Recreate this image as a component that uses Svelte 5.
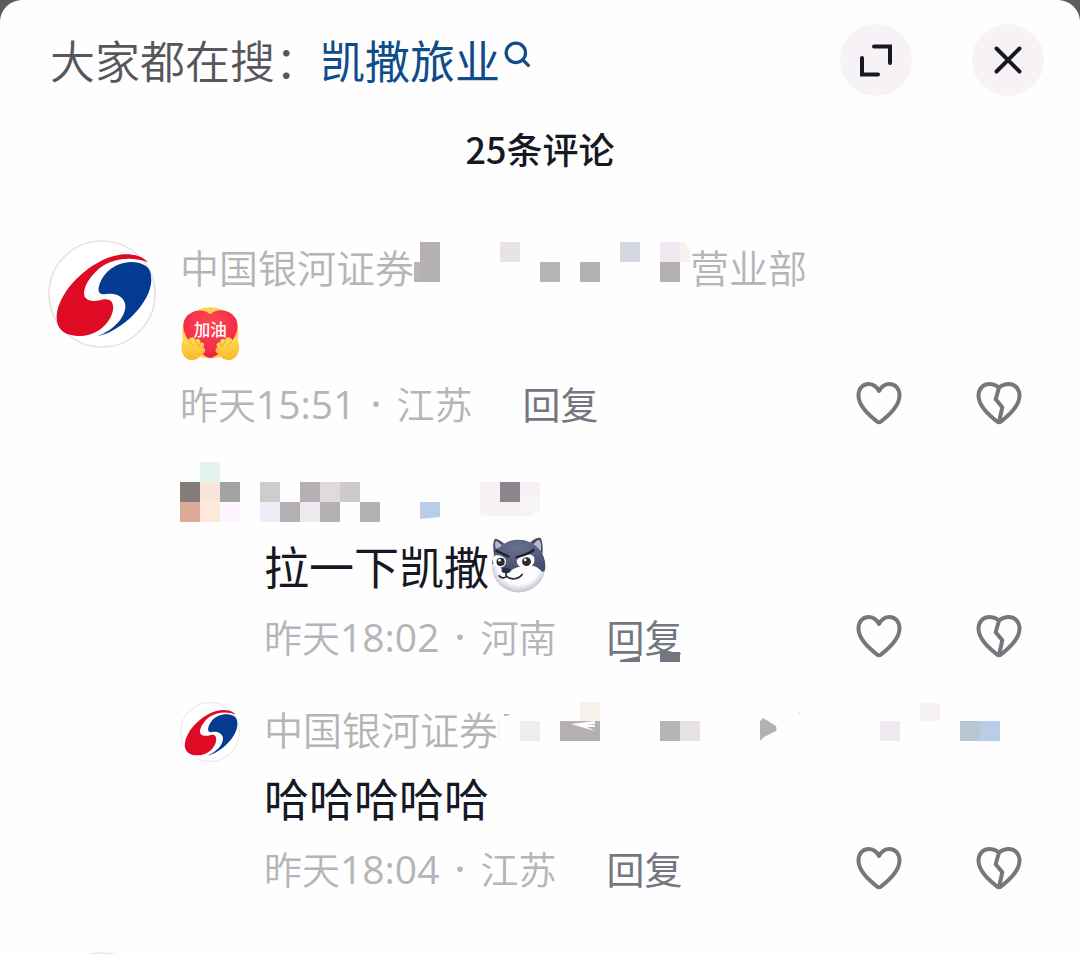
<script>
  const comments = [
    {
      kind: 'main',
      name: '中国银河证券',
      suffix: '营业部',
      mask: 'branch',
      sticker: 'cheer',
      time: '15:51',
      place: '江苏'
    },
    { kind: 'reply', mask: 'user', text: '拉一下凯撒', sticker: 'wolf', time: '18:02', place: '河南', covered: true },
    { kind: 'reply', name: '中国银河证券', mask: 'long', text: '哈哈哈哈哈', time: '18:04', place: '江苏' }
  ];

  const masks = {
    branch: {
      w: 276,
      h: 52,
      cells: [
        [0, 22, 6, 20, '#b3b6b5'], [6, 2, 20, 40, '#b4b0b4'], [86, 2, 20, 20, '#e7e2e6'],
        [126, 22, 20, 20, '#b3b6b5'], [166, 22, 20, 20, '#b4b0b4'], [206, 2, 20, 20, '#d5d7e0'],
        [246, 2, 20, 20, '#eee9ee'], [246, 22, 20, 20, '#b4b0b4']
      ],
      shapes: [['M266 2h4q8 8 10 20h-14z', '#f8f2ed']]
    },
    user: {
      w: 360,
      h: 68,
      cells: [
        [20, 0, 20, 20, '#e1f3ec'], [0, 20, 20, 20, '#857c7a'], [20, 20, 20, 20, '#fae5dc'],
        [40, 20, 20, 20, '#a1a4a0'], [0, 40, 20, 20, '#dcab98'], [20, 40, 20, 20, '#ffe9db'],
        [40, 40, 20, 20, '#fdf6ff'], [80, 20, 20, 20, '#cdcdcd'], [120, 20, 20, 20, '#b4b0b4'],
        [140, 20, 20, 20, '#dfdade'], [160, 20, 20, 20, '#cec9cd'], [80, 40, 20, 20, '#eceef7'],
        [100, 40, 20, 20, '#b4b0b4'], [120, 40, 20, 20, '#eee9ee'], [140, 40, 20, 20, '#b4b0b4'],
        [180, 40, 20, 20, '#b4b0b4']
      ],
      shapes: [
        ['M240 40h20v15l-20 2z', '#b8cde8'],
        ['M300 20h60v30h-5l-4 4h-47l-4-2z', '#f7f2f6'],
        ['M320 20h20v20h-20z', '#8c858b'],
        ['M340 40h20v10h-20z', '#f7f6f7']
      ]
    },
    long: {
      w: 522,
      h: 60,
      cells: [
        [0, 19, 2, 20, '#f6f6f6'], [22, 19, 20, 20, '#eeeeee'], [82, 0, 20, 20, '#f8f2ed'],
        [62, 19, 40, 20, '#b4b0b4'], [162, 19, 20, 20, '#b3b6b5'], [182, 19, 20, 20, '#e7e2e6'],
        [382, 19, 20, 20, '#eee9ee'], [422, 1, 20, 18, '#f7f2f6'], [462, 19, 20, 20, '#b7c8d4'],
        [482, 19, 20, 20, '#b8cde8']
      ],
      shapes: [
        ['M73 22l24-3v3l-9 1h9v2h-8l8 4z', '#fefefe'],
        ['M6 12h6l-3 2h-3z', '#b9b6ba'],
        ['M262 19l3-3 13 8q1 3 0 5l-12 6-4 4z', '#b4b0b4'],
        ['M300 11l3-1-1 1z', '#b9b6ba']
      ]
    }
  };
</script>

{#snippet logo()}
  <svg class="avatar" viewBox="24 30 324 324" role="img" aria-label="中国银河证券">
    <circle cx="186" cy="192" r="159" fill="#fff" stroke="#e5e2e6" stroke-width="5" />
    <path fill="#df0b25" d="M324 97C296 65 232 66 184 92C120 124 58 190 50 254C47 300 76 319 124 318C171 315 210 283 219 240C222 215 211 205 190 208C166 216 142 214 134 200C126 178 146 142 180 113C220 84 278 78 324 97Z" />
    <path fill="#043b91" d="M332 130C327 103 291 91 254 98C214 106 184 135 176 172C174 191 182 195 200 192C230 188 252 201 256 225C258 261 222 300 172 319C246 304 333 218 334 150Z" />
  </svg>
{/snippet}

{#snippet cheer()}
  <svg class="cheer" viewBox="417 230 180 166" role="img" aria-label="加油">
    <defs>
      <radialGradient id="cheer-heart" cx="50%" cy="30%" r="75%">
        <stop offset="0" stop-color="#ff4850" />
        <stop offset="1" stop-color="#ee1f45" />
      </radialGradient>
      <linearGradient id="cheer-hand" x1="0" y1="0" x2="0" y2="1">
        <stop offset="0" stop-color="#ffdc57" />
        <stop offset="1" stop-color="#fbb92c" />
      </linearGradient>
    </defs>
    <ellipse cx="508" cy="308" rx="85" ry="77" fill="#ffd052" />
    <path fill="url(#cheer-heart)" d="M508 252C487 232 447 238 431 266C417 296 438 333 466 358C482 372 497 382 508 384C519 382 538 370 552 356C580 332 600 296 585 265C568 237 529 232 508 252Z" />
    <g fill="url(#cheer-hand)">
      <path d="M422 340C422 325 434 319 441 330C449 317 462 320 462 329C472 323 481 329 477 338C488 335 493 344 486 352C497 357 493 367 483 372C474 387 460 392 447 390C429 387 417 366 422 340Z" />
      <path d="M594 340C594 325 582 319 575 330C567 317 554 320 554 329C544 323 535 329 539 338C528 335 523 344 530 352C519 357 523 367 533 372C542 387 556 392 569 390C587 387 599 366 594 340Z" />
    </g>
    <g fill="none" stroke="#f0a02a" stroke-width="3" stroke-linecap="round">
      <path d="M443 333l12 13M462 332l8 14M477 341l-3 9M573 333l-12 13M554 332l-8 14M539 341l3 9" />
    </g>
    <text x="508" y="317" text-anchor="middle" font-size="50" font-weight="500" fill="#fff">加油</text>
  </svg>
{/snippet}

{#snippet wolf()}
  <svg class="wolf" viewBox="42 28 160 170" role="img" aria-label="坏笑">
    <defs>
      <radialGradient id="wolf-fur" cx="50%" cy="25%" r="75%">
        <stop offset="0" stop-color="#6b7390" />
        <stop offset="1" stop-color="#454b68" />
      </radialGradient>
      <radialGradient id="wolf-face" cx="50%" cy="45%" r="56%">
        <stop offset="0.7" stop-color="#fdfcff" />
        <stop offset="1" stop-color="#bdbacb" />
      </radialGradient>
      <clipPath id="wolf-head"><ellipse cx="121" cy="116" rx="79" ry="78" /></clipPath>
    </defs>
    <path fill="#454b68" d="M50 88C45 64 45 42 52 36C63 37 76 47 86 57ZM150 52C160 40 177 29 185 34C192 42 193 68 190 92Z" />
    <path fill="#b9b9ca" d="M54 66C51 54 51 45 55 43C62 46 69 52 74 58ZM164 53C172 42 180 37 183 41C188 49 187 66 185 80Z" />
    <g clip-path="url(#wolf-head)">
      <ellipse cx="121" cy="116" rx="79" ry="78" fill="url(#wolf-face)" />
      <path fill="url(#wolf-fur)" d="M34 119C34 72 67 38 117 38C168 38 200 74 200 120C197 134 192 136 184 127C172 114 157 113 143 117C120 119 108 120 97 132H75C70 119 58 111 49 109C41 107 37 112 34 119Z" />
    </g>
    <path fill="#fff" d="M46 91C54 79 75 86 83 97C88 118 65 127 53 116C45 108 42 99 46 91ZM116 98C127 82 158 74 166 90C173 113 151 128 132 121C120 117 114 108 116 98Z" />
    <circle cx="68" cy="104" r="12" fill="#302831" />
    <circle cx="144" cy="103" r="13" fill="#302831" />
    <circle cx="65" cy="99" r="4" fill="#fff" /><circle cx="140" cy="98" r="4" fill="#fff" />
    <path fill="none" stroke="#1e2034" stroke-width="7" stroke-linecap="round" d="M57 72L91 88M115 90C133 85 151 82 165 69" />
    <ellipse cx="84" cy="129" rx="13" ry="8" fill="#292e46" />
    <path fill="none" stroke="#292937" stroke-width="5" stroke-linecap="round" d="M84 136V145M64 145C73 155 82 150 86 146C98 158 122 155 131 141" />
  </svg>
{/snippet}

{#snippet mosaic(m)}
  <svg class="mosaic" width={m.w} height={m.h} viewBox="0 0 {m.w} {m.h}" aria-hidden="true">
    {#each m.cells as [x, y, w, h, fill]}
      <rect {x} {y} width={w} height={h} {fill} />
    {/each}
    {#each m.shapes as [d, fill]}
      <path {d} {fill} />
    {/each}
  </svg>
{/snippet}

<main class="sheet">
  <header>
    <p class="search">
      <span>大家都在搜：</span><a href="#search">凯撒旅业<svg class="lens" viewBox="0 0 26 26" aria-hidden="true"><circle cx="11" cy="11" r="9" /><path d="M17.5 17.5l6 6" /></svg></a>
    </p>
    <button class="round" aria-label="展开">
      <svg viewBox="0 0 72 72"><path d="M34 22.5H50V39M22 34V50.5H38" /></svg>
    </button>
    <button class="round" aria-label="关闭">
      <svg viewBox="0 0 72 72"><path d="M24.5 24.5L47.5 47.5M47.5 24.5L24.5 47.5" /></svg>
    </button>
  </header>

  <h1>25条评论</h1>

  <section class="list">
    {#each comments as c}
      <article class={c.kind}>
        {#if c.name}{@render logo()}{/if}
        <div class="name" class:hidden-user={!c.name}>
          {#if c.name}<span>{c.name}</span>{/if}
          {@render mosaic(masks[c.mask])}
          {#if c.suffix}<span>{c.suffix}</span>{/if}
        </div>
        <div class="text">
          {#if c.text}<span>{c.text}</span>{/if}
          {#if c.sticker === 'cheer'}{@render cheer()}{/if}
          {#if c.sticker === 'wolf'}{@render wolf()}{/if}
        </div>
        <footer>
          <span class="when">昨天<span class="clock">{c.time}</span></span>
          <span class="dot">·</span>
          <span>{c.place}</span>
          <button class="answer">
            回复
            {#if c.covered}
              <svg class="patch" viewBox="0 0 60 10" aria-hidden="true"><path d="M0 8l20-4v6H0zM40 0h20v10H40z" /></svg>
            {/if}
          </button>
          <span class="votes">
            <button aria-label="喜欢">
              <svg viewBox="0 0 48 48"><path d="M24 12C21.5 7.5 18 5 13.5 5C7.5 5 3.5 10 3.5 16.5C3.5 27 14 36 22 42.5Q24 44 26 42.5C34 36 44.5 27 44.5 16.5C44.5 10 40.5 5 34.5 5C30 5 26.5 7.5 24 12Z" /></svg>
            </button>
            <button aria-label="不喜欢">
              <svg viewBox="0 0 48 48"><path d="M24 8.5C21 6 18 5 14 5C8 5 3.5 10 3.5 16.5C3.5 27 14 36 22 42.5Q24 44 26 42.5C34 36 44.5 27 44.5 16.5C44.5 10 40 5 34 5C30 5 27 6 24 8.5L20.7 20.3L27.3 28.3L24 43" /></svg>
            </button>
          </span>
        </footer>
      </article>
    {/each}
    <article class="main next">{@render logo()}</article>
  </section>
</main>

<style>
  :global(body) {
    margin: 0;
    background: #5b5b59;
  }
  .sheet {
    box-sizing: border-box;
    height: 100vh;
    overflow: hidden;
    padding: 24px 36px 0 48px;
    border-radius: 22px 22px 0 0;
    background: #fefefe;
    color: #161823;
    font-family: "Noto Sans CJK SC", sans-serif;
  }
  button {
    padding: 0;
    border: 0;
    background: none;
    color: inherit;
    font: inherit;
    cursor: pointer;
  }
  svg {
    display: block;
    flex: none;
  }
  header {
    display: flex;
    align-items: center;
    gap: 60px;
  }
  .search {
    flex: 1;
    margin: 0;
    padding-left: 2px;
    color: #57565d;
    font-size: 45px;
    font-weight: 350;
    line-height: 72px;
    white-space: nowrap;
  }
  .search a {
    color: #104c8b;
    font-weight: 400;
    text-decoration: none;
  }
  .lens {
    display: inline-block;
    width: 28px;
    height: 28px;
    margin-left: 4px;
    vertical-align: 10px;
    fill: none;
    stroke: #104c8b;
    stroke-width: 3;
  }
  .round {
    width: 72px;
    height: 72px;
    border-radius: 50%;
    background: #f7f2f6;
  }
  .round svg {
    fill: none;
    stroke: #161823;
    stroke-width: 4;
    stroke-linecap: round;
  }
  h1 {
    margin: 28px 0 68px;
    padding-right: 12px;
    font-size: 36px;
    font-weight: 500;
    line-height: 48px;
    text-align: center;
  }
  article {
    display: grid;
    grid-template-columns: auto minmax(0, 1fr);
    column-gap: 24px;
  }
  .avatar {
    width: 108px;
    height: 108px;
    grid-row: 1 / span 3;
  }
  .reply {
    grid-template-columns: 60px minmax(0, 1fr);
    margin: 44px 0 0 132px;
  }
  .main + .reply {
    margin-top: 37px;
  }
  .reply .avatar {
    width: 60px;
    height: 60px;
  }
  .next {
    margin-top: 62px;
  }
  .name {
    display: flex;
    grid-column: 2;
    height: 52px;
    color: #b6b4b8;
    font-size: 39px;
    font-weight: 350;
    line-height: 52px;
    white-space: nowrap;
  }
  .reply .name {
    height: 60px;
  }
  .reply .hidden-user {
    grid-column: 1 / -1;
    height: 68px;
  }
  .text {
    display: flex;
    grid-column: 2;
    height: 60px;
    margin: 6px 0 18px;
    font-size: 45px;
    line-height: 60px;
  }
  .main .text {
    align-items: center;
    margin: 12px 0 17px;
  }
  .cheer {
    width: 60px;
    height: 55px;
  }
  .wolf {
    width: 56px;
    height: 58px;
    margin-left: 2px;
  }
  footer {
    display: flex;
    grid-column: 2;
    align-items: center;
    height: 44px;
    color: #b6b4b8;
    font-size: 38px;
    font-weight: 350;
    line-height: 44px;
    white-space: nowrap;
  }
  .clock {
    font-family: "Open Sans", sans-serif;
    font-size: 39px;
    font-weight: 400;
  }
  .dot {
    width: 41px;
    font-family: "Open Sans", sans-serif;
    font-weight: 600;
    text-align: center;
  }
  .answer {
    position: relative;
    margin-left: 50px;
    color: #74777f;
    font-weight: 400;
  }
  .patch {
    position: absolute;
    bottom: -4px;
    left: 14px;
    width: 60px;
    height: 10px;
    fill: #74777f;
  }
  .votes {
    display: flex;
    gap: 72px;
    margin-left: auto;
    padding-right: 21px;
  }
  .votes svg {
    width: 48px;
    height: 48px;
    fill: none;
    stroke: #74777c;
    stroke-width: 4;
    stroke-linejoin: round;
  }
</style>
